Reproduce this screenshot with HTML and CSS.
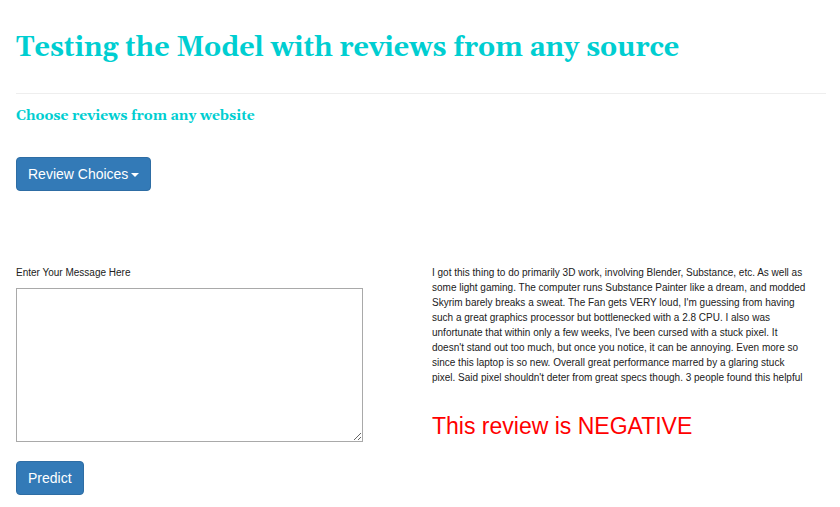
FILE: index.html
```html
<!DOCTYPE html>
<html lang="en">
<head>
<meta charset="utf-8">
<title>Review Model</title>
<link rel="stylesheet" href="styles.css">
</head>
<body>
<main class="page">
  <h1 class="title">Testing the Model with reviews from any source</h1>
  <hr class="rule">
  <h2 class="subtitle">Choose reviews from any website</h2>
  <button class="btn" type="button">Review Choices<span class="caret"></span></button>
  <div class="columns">
    <form class="entry">
      <label class="label" for="message">Enter Your Message Here</label>
      <textarea class="message" id="message"></textarea>
      <button class="btn" type="button">Predict</button>
    </form>
    <section class="result">
      <p class="review">I got this thing to do primarily 3D work, involving Blender, Substance, etc. As well as some light gaming. The computer runs Substance Painter like a dream, and modded Skyrim barely breaks a sweat. The Fan gets VERY loud, I'm guessing from having such a great graphics processor but bottlenecked with a 2.8 CPU. I also was unfortunate that within only a few weeks, I've been cursed with a stuck pixel. It doesn't stand out too much, but once you notice, it can be annoying. Even more so since this laptop is so new. Overall great performance marred by a glaring stuck pixel. Said pixel shouldn't deter from great specs though. 3 people found this helpful</p>
      <p class="verdict">This review is NEGATIVE</p>
    </section>
  </div>
</main>
</body>
</html>
```
FILE: styles.css
```css
* {
  box-sizing: border-box;
}

body {
  margin: 0;
  background: #fff;
  color: #212121;
  font: 10px/15px "Liberation Sans", Arial, sans-serif;
}

.page {
  padding: 32px 14px 12px 16px;
}

.title,
.subtitle {
  margin: 0;
  color: #00ced1;
  font-family: Georgia, Gelasio, "DejaVu Serif", "Liberation Serif", serif;
  font-weight: bold;
}

.title {
  font-size: 27px;
  line-height: 32px;
}

.rule {
  margin: 29px 0 12px;
  border: 0;
  border-top: 1px solid #eee;
}

.subtitle {
  margin-bottom: 31px;
  font-size: 14px;
  line-height: 20px;
}

.btn {
  padding: 6px 11px;
  border: 1px solid #2e6da4;
  border-radius: 4px;
  background: #337ab7;
  color: #fff;
  font: 14px/20px "Liberation Sans", Arial, sans-serif;
}

.caret {
  display: inline-block;
  margin-left: 3px;
  border: 4px solid transparent;
  border-top-color: #fff;
  border-bottom: 0;
  vertical-align: middle;
}

.columns {
  display: grid;
  grid-template-columns: 1fr 1fr;
  gap: 22px;
  margin-top: 74px;
}

.entry {
  display: flex;
  flex-direction: column;
  align-items: flex-start;
}

.message {
  width: 88%;
  height: 154px;
  margin: 8px 0 19px;
  border: 1px solid #a9a9a9;
}

.result {
  padding-right: 18px;
}

.review,
.verdict {
  margin: 0;
}

.verdict {
  margin-top: 28px;
  color: #f00;
  font-size: 23px;
  line-height: 26px;
}
```
